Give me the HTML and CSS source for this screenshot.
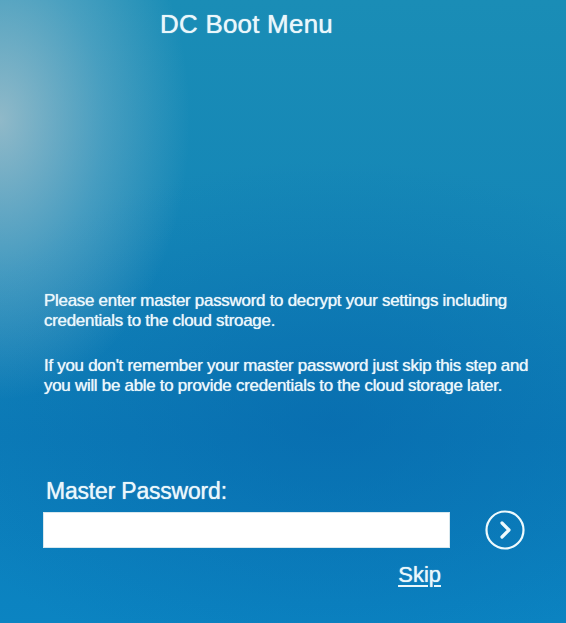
FILE: index.html
```html
<!DOCTYPE html>
<html lang="en">
<head>
<meta charset="utf-8">
<title>DC Boot Menu</title>
<link rel="stylesheet" href="styles.css">
</head>
<body>
<main class="screen">
  <h1 class="title">DC Boot Menu</h1>
  <section class="intro">
    <p>Please enter master password to decrypt your settings including credentials to the cloud stroage.</p>
    <p>If you don't remember your master password just skip this step and you will be able to provide credentials to the cloud storage later.</p>
  </section>
  <form class="login">
    <label class="label" for="pw">Master Password:</label>
    <div class="row">
      <input class="field" id="pw" type="password">
      <button class="go" type="button" aria-label="Continue">
        <svg viewBox="0 0 40 40" width="40" height="40">
          <circle cx="20" cy="20" r="18.5" fill="none" stroke="#eefafd" stroke-width="2.2"/>
          <path d="M17 13 L24 20 L17 27" fill="none" stroke="#eefafd" stroke-width="3.2" stroke-linecap="round" stroke-linejoin="round"/>
        </svg>
      </button>
    </div>
    <div class="skiprow"><a class="skip" href="#">Skip</a></div>
  </form>
</main>
</body>
</html>
```
FILE: styles.css
```css
html, body {
  margin: 0;
  height: 100%;
}
body {
  background:
    radial-gradient(ellipse 190px 280px at 0px 120px, rgba(195, 205, 208, 0.7), rgba(160, 195, 210, 0.35) 55%, rgba(120, 180, 210, 0) 100%),
    radial-gradient(ellipse 420px 260px at 330px 420px, rgba(5, 100, 170, 0.55), rgba(5, 100, 170, 0) 100%),
    linear-gradient(180deg, #1a8db6 0%, #1486b7 40%, #0c7cb8 70%, #0b84c2 100%);
  color: #eaf7fb;
  font-family: "Liberation Sans", Arial, sans-serif;
  overflow: hidden;
}
.screen {
  padding: 9px 0 0 43px;
  display: flex;
  flex-direction: column;
}
.title {
  width: 407px;
  margin: 0;
  text-align: center;
  font-size: 26px;
  font-weight: normal;
  line-height: 30px;
  letter-spacing: 0.2px;
  text-shadow: 0 0 1px rgba(255,255,255,0.9);
}
.intro {
  margin-top: 252px;
  width: 490px;
  padding-left: 1px;
  font-size: 17px;
  line-height: 20px;
  letter-spacing: -0.3px;
  text-shadow: 0 0 0.8px rgba(255,255,255,0.9);
}
.intro p {
  margin: 0 0 25px 0;
}
.login {
  margin-top: 56px;
  display: flex;
  flex-direction: column;
}
.label {
  font-size: 23px;
  line-height: 28px;
  padding-left: 3px;
  letter-spacing: -0.2px;
  text-shadow: 0 0 1px rgba(255,255,255,0.9);
}
.row {
  margin-top: 5px;
  display: flex;
  align-items: center;
  gap: 35px;
}
.field {
  width: 407px;
  height: 36px;
  box-sizing: border-box;
  margin: 0;
  border: 1px solid #d8e8ee;
  background: #ffffff;
  outline: none;
}
.go {
  width: 40px;
  height: 40px;
  padding: 0;
  border: 0;
  background: none;
  display: flex;
}
.skiprow {
  width: 407px;
  display: flex;
  justify-content: flex-end;
  margin-top: 12px;
}
.skip {
  margin-right: 9px;
  color: #eaf7fb;
  font-size: 22px;
  line-height: 26px;
  text-decoration: underline;
  text-decoration-thickness: 2px;
  text-underline-offset: 3px;
  text-shadow: 0 0 1px rgba(255,255,255,0.9);
}
```
